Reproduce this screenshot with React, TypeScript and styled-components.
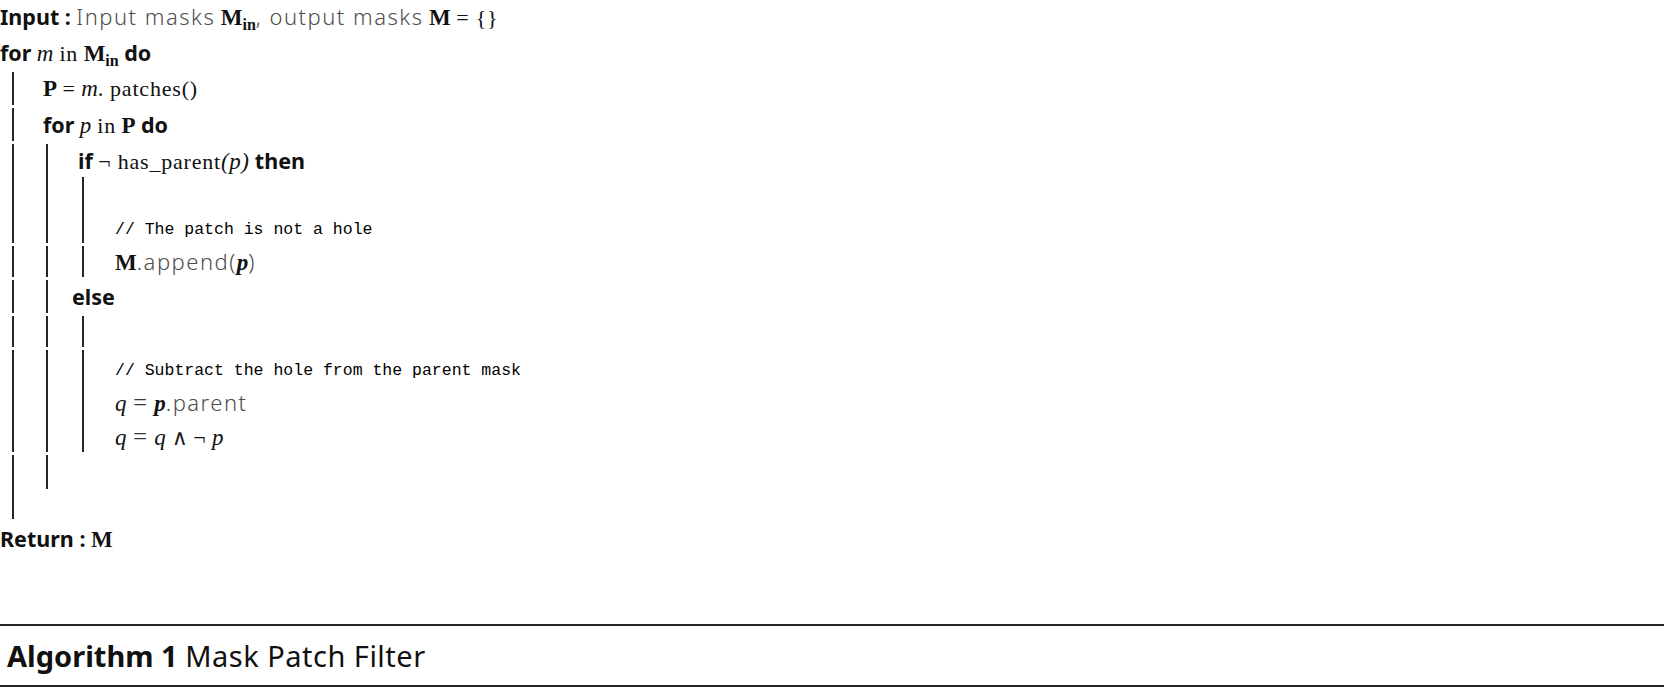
import React from "react";
import styled, { createGlobalStyle } from "styled-components";

const Global = createGlobalStyle`
  html, body { margin: 0; padding: 0; background: #ffffff; overflow: hidden; }
  body { font-family: "Noto Sans", "Open Sans", sans-serif; color: #111111; }
`;

const Page = styled.div`
  width: 1664px;
  height: 690px;
  display: flex;
  flex-direction: column;
`;

const Algo = styled.div`
  display: flex;
  flex-direction: column;
  gap: 3px;
`;

const Row = styled.div<{ $h?: number; $shift?: number }>`
  height: ${(p) => p.$h ?? 33}px;
  line-height: ${(p) => p.$h ?? 33}px;
  font-size: 21px;
  white-space: nowrap;
  margin-left: ${(p) => p.$shift ?? 0}px;
`;

const Block = styled.div<{ $ml: number; $pl: number }>`
  display: flex;
  flex-direction: column;
  margin-left: ${(p) => p.$ml}px;
  padding-left: ${(p) => p.$pl}px;
  border-left: 2px solid #262626;
`;

const Kw = styled.span`
  font-family: "Noto Sans", "Open Sans", sans-serif;
  font-weight: 700;
  font-size: 21.5px;
  color: #111111;
`;

const Light = styled.span`
  font-family: "Noto Sans", "Open Sans", sans-serif;
  font-weight: 300;
  font-size: 22px;
  letter-spacing: 1.5px;
  color: #4d4d4d;
`;

const Eq = styled.span`
  font-family: "Noto Sans", "Open Sans", sans-serif;
  font-weight: 300;
  font-size: 25px;
  margin: 0 7px 0 6px;
  color: #3a3a3a;
`;

const MathR = styled.span`
  font-family: "Liberation Serif", "DejaVu Serif", serif;
  font-size: 22px;
  letter-spacing: 0.8px;
  color: #111111;
`;

const MathI = styled.i`
  font-family: "Liberation Serif", "DejaVu Serif", serif;
  font-style: italic;
  font-size: 23px;
  letter-spacing: 0.5px;
  color: #111111;
`;

const MathB = styled.b`
  font-family: "Liberation Serif", "DejaVu Serif", serif;
  font-weight: 700;
  font-size: 23px;
  color: #111111;
`;

const MathBI = styled.b`
  font-family: "Liberation Serif", "DejaVu Serif", serif;
  font-weight: 700;
  font-style: italic;
  font-size: 23px;
  color: #111111;
`;

const Wedge = styled.span`
  font-family: "DejaVu Serif", "DejaVu Sans", serif;
  font-size: 22px;
  color: #222222;
`;

const Sub = styled.sub`
  font-size: 16px;
  vertical-align: -5px;
  line-height: 0;
`;

const Comment = styled.span`
  font-family: "Liberation Mono", "DejaVu Sans Mono", monospace;
  font-size: 16.5px;
  color: #000000;
`;

const Caption = styled.div`
  margin-top: 69px;
  height: 59px;
  line-height: 59px;
  border-top: 2px solid #262626;
  border-bottom: 2px solid #262626;
  padding-left: 7px;
  font-size: 29px;
  white-space: nowrap;
  color: #111111;
`;

const CapLabel = styled.b`
  font-weight: 700;
`;

const CapTitle = styled.span`
  font-weight: 400;
  letter-spacing: 0.5px;
`;

const L1 = { $ml: 12, $pl: 29 };
const L2 = { $ml: 3, $pl: 30 };
const L3 = { $ml: 4, $pl: 31 };

export default function App() {
  return (
    <Page>
      <Global />
      <Algo>
        <Row>
          <Kw>Input :</Kw> <Light>Input masks</Light>{" "}
          <MathB>
            M<Sub>in</Sub>
          </MathB>
          <Light>, output masks</Light> <MathB>M</MathB> <MathR>= {"{}"}</MathR>
        </Row>
        <Row>
          <Kw>for</Kw> <MathI>m</MathI> <MathR>in</MathR>{" "}
          <MathB>
            M<Sub>in</Sub>
          </MathB>{" "}
          <Kw>do</Kw>
        </Row>
        <Block {...L1}>
          <Row>
            <MathB>P</MathB> <MathR>=</MathR> <MathI>m.</MathI> <MathR>patches()</MathR>
          </Row>
        </Block>
        <Block {...L1}>
          <Row>
            <Kw>for</Kw> <MathI>p</MathI> <MathR>in</MathR> <MathB>P</MathB> <Kw>do</Kw>
          </Row>
        </Block>
        <Block {...L1}>
          <Block {...L2}>
            <Row>
              <Kw>if</Kw> <MathR>¬ has_parent</MathR>
              <MathI>(p)</MathI> <Kw>then</Kw>
            </Row>
            <Block {...L3}>
              <Row />
              <Row>
                <Comment>// The patch is not a hole</Comment>
              </Row>
            </Block>
          </Block>
        </Block>
        <Block {...L1}>
          <Block {...L2}>
            <Block {...L3}>
              <Row $h={31}>
                <MathB>M</MathB>
                <Light>.append(</Light>
                <MathBI>p</MathBI>
                <Light>)</Light>
              </Row>
            </Block>
          </Block>
        </Block>
        <Block {...L1}>
          <Block {...L2}>
            <Row $shift={-6}>
              <Kw>else</Kw>
            </Row>
          </Block>
        </Block>
        <Block {...L1}>
          <Block {...L2}>
            <Block {...L3}>
              <Row $h={31} />
            </Block>
          </Block>
        </Block>
        <Block {...L1}>
          <Block {...L2}>
            <Block {...L3}>
              <Row $h={34}>
                <Comment>// Subtract the hole from the parent mask</Comment>
              </Row>
              <Row $h={34}>
                <MathI>q</MathI>
                <Eq>=</Eq>
                <MathBI>p</MathBI>
                <Light>.parent</Light>
              </Row>
              <Row $h={34}>
                <MathI>q</MathI>
                <Eq>=</Eq>
                <MathI>q</MathI> <Wedge>∧</Wedge> <MathR>¬</MathR> <MathI>p</MathI>
              </Row>
            </Block>
          </Block>
        </Block>
        <Block {...L1}>
          <Block {...L2}>
            <Row $h={34} />
          </Block>
          <Row $h={30} />
        </Block>
        <Row>
          <Kw>Return :</Kw> <MathB>M</MathB>
        </Row>
      </Algo>
      <Caption>
        <CapLabel>Algorithm 1</CapLabel> <CapTitle>Mask Patch Filter</CapTitle>
      </Caption>
    </Page>
  );
}
